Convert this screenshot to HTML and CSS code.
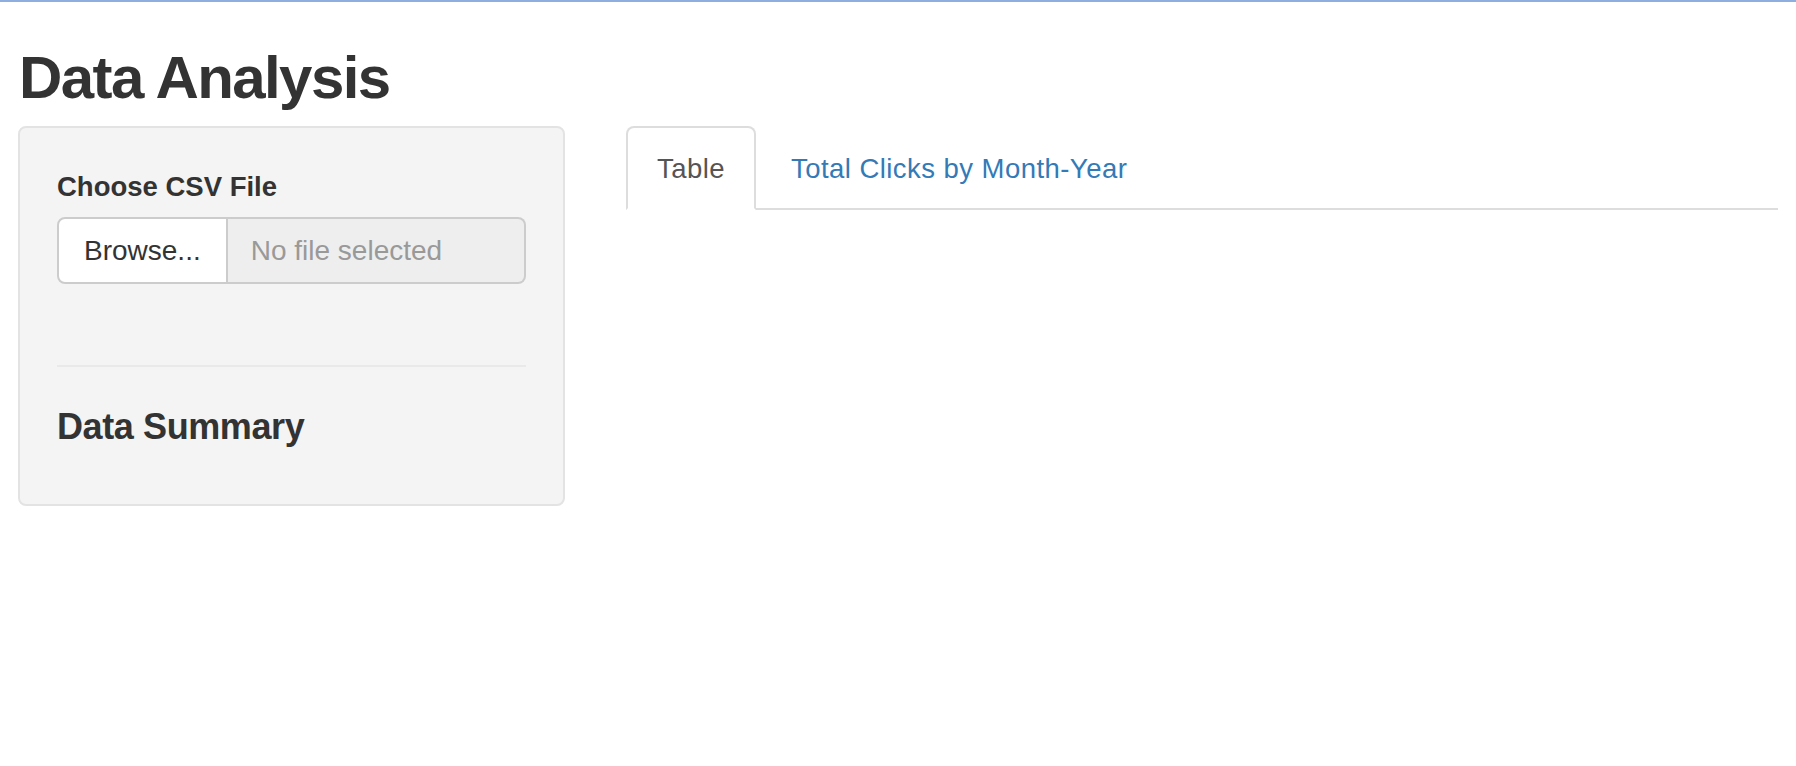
FILE: index.html
```html
<!DOCTYPE html>
<html lang="en">
<head>
    <meta charset="UTF-8">
    <meta name="viewport" content="width=device-width, initial-scale=1.0">
    <title>Data Analysis</title>
    <link rel="stylesheet" href="styles.css">
</head>
<body>
    <div class="container">
        <h2 class="title">Data Analysis</h2>
        <div class="row">
            <div class="sidebar">
                <div class="well">
                    <div class="form-group">
                        <label for="file1">Choose CSV File</label>
                        <div class="input-group">
                            <label class="btn-browse">Browse...<input type="file" id="file1" accept=".csv"></label>
                            <input type="text" class="file-name" placeholder="No file selected" readonly>
                        </div>
                    </div>
                    <hr>
                    <h4>Data Summary</h4>
                </div>
            </div>
            <div class="main">
                <ul class="nav-tabs">
                    <li class="active"><a href="#">Table</a></li>
                    <li><a href="#">Total Clicks by Month-Year</a></li>
                </ul>
                <div class="tab-content"></div>
            </div>
        </div>
    </div>
</body>
</html>
```
FILE: styles.css
```css
body {
    margin: 0;
    border-top: 2px solid #8eaee0;
    font-family: "Liberation Sans", Arial, sans-serif;
    font-size: 27.5px;
    color: #333;
    background-color: #fff;
}
.container {
    padding: 0 18px;
}
.title {
    font-size: 60px;
    font-weight: bold;
    letter-spacing: -1.6px;
    line-height: 66px;
    margin: 43px 0 15px 1px;
}
.row {
    display: grid;
    grid-template-columns: 547px 1fr;
    gap: 61px;
    align-items: start;
}
.well {
    background-color: #f4f4f4;
    border: 2px solid #e3e3e3;
    border-radius: 8px;
    padding: 39px 37px 37px;
}
.form-group label {
    display: block;
    font-size: 27.5px;
    font-weight: bold;
    line-height: 39px;
    margin-bottom: 11px;
}
.input-group {
    display: flex;
    height: 67px;
    box-sizing: border-box;
}
.input-group .btn-browse {
    display: flex;
    align-items: center;
    margin: 0;
    padding: 0 25px;
    font-size: 28px;
    font-weight: normal;
    line-height: 39px;
    background-color: #fff;
    border: 2px solid #ccc;
    border-radius: 8px 0 0 8px;
    cursor: pointer;
}
.btn-browse input {
    display: none;
}
.file-name {
    flex: 1;
    min-width: 0;
    box-sizing: border-box;
    height: 67px;
    margin: 0;
    padding: 0 23px;
    font-family: inherit;
    font-size: 28px;
    color: #333;
    background-color: #eee;
    border: 2px solid #ccc;
    border-left: none;
    border-radius: 0 8px 8px 0;
    outline: none;
}
.file-name::placeholder {
    color: #999;
}
.well hr {
    margin: 81px 0 0;
    border: none;
    border-top: 2px solid #e9e9e9;
}
.well h4 {
    font-size: 36px;
    font-weight: bold;
    letter-spacing: -0.4px;
    line-height: 40px;
    margin: 40px 0 20px;
}
.nav-tabs {
    display: flex;
    list-style: none;
    margin: 0;
    padding: 0;
    border-bottom: 2px solid #ddd;
}
.nav-tabs li {
    margin-right: 4px;
    margin-bottom: -2px;
}
.nav-tabs a {
    display: block;
    padding: 21px 29px 20px;
    line-height: 39px;
    font-size: 27.5px;
    letter-spacing: 0.45px;
    color: #337ab7;
    text-decoration: none;
    border: 2px solid transparent;
    border-radius: 8px 8px 0 0;
}
.nav-tabs .active a {
    color: #555;
    background-color: #fff;
    border-color: #ddd;
    border-bottom-color: transparent;
}
```
